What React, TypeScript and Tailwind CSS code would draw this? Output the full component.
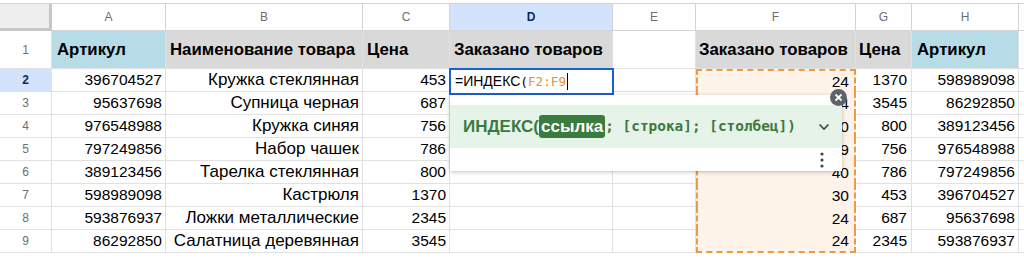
import React from 'react';

const cols = ['A', 'B', 'C', 'D', 'E', 'F', 'G', 'H'];

const rows = [
  { n: 2, a: '396704527', b: 'Кружка стеклянная', c: '453', f: '24', g: '1370', h: '598989098' },
  { n: 3, a: '95637698', b: 'Супница черная', c: '687', f: '34', g: '3545', h: '86292850' },
  { n: 4, a: '976548988', b: 'Кружка синяя', c: '756', f: '20', g: '800', h: '389123456' },
  { n: 5, a: '797249856', b: 'Набор чашек', c: '786', f: '19', g: '756', h: '976548988' },
  { n: 6, a: '389123456', b: 'Тарелка стеклянная', c: '800', f: '40', g: '786', h: '797249856' },
  { n: 7, a: '598989098', b: 'Кастрюля', c: '1370', f: '30', g: '453', h: '396704527' },
  { n: 8, a: '593876937', b: 'Ложки металлические', c: '2345', f: '24', g: '687', h: '95637698' },
  { n: 9, a: '86292850', b: 'Салатница деревянная', c: '3545', f: '24', g: '2345', h: '593876937' },
];

const line = 'border-r border-b border-[#e1e1e1]';
const head = `${line} font-bold text-[16.8px] flex items-center whitespace-nowrap overflow-hidden`;
const mono = { fontFamily: '"DejaVu Sans Mono", monospace' };

const Num: React.FC<{ children?: React.ReactNode; className?: string }> = ({ children, className = '' }) => (
  <div className={`${line} flex items-center justify-end pr-[3px] whitespace-nowrap overflow-hidden ${className}`}>
    {children}
  </div>
);

const App: React.FC = () => {
  return (
    <div
      className="relative w-[1024px] h-[258px] overflow-hidden bg-white pt-[3px] text-[15.5px] text-black"
      style={{ fontFamily: '"Liberation Sans", Arial, sans-serif' }}
    >
      <div className="grid grid-cols-[52px_114px_197px_87px_163px_83px_160px_56px_107px_5px] grid-rows-[27px_38px_repeat(9,23px)] border-t border-[#d4d4d4]">
        {/* column headers */}
        <div className="bg-[#eeeeee] border-r-[3px] border-b-[3px] border-[#c7c7c7]" />
        {cols.map((c) => (
          <div
            key={c}
            className={`flex items-center justify-center text-[12px] border-r border-b border-[#d4d4d4] ${
              c === 'D' ? 'bg-[#d3e3fd] text-[#0b2a5c] font-bold' : 'bg-white text-[#6b6f73]'
            }`}
          >
            {c}
          </div>
        ))}
        <div className="border-b border-[#d4d4d4]" />

        {/* row 1 */}
        <div className={`${line} flex items-center justify-center text-[12px] text-[#6b6f73]`}>1</div>
        <div className={`${head} bg-[#b5dce7] pl-[5px]`}>Артикул</div>
        <div className={`${head} bg-[#d9d9d9] pl-[4px]`}>Наименование товара</div>
        <div className={`${head} bg-[#d9d9d9] pl-[4px]`}>Цена</div>
        <div className={`${head} bg-[#d9d9d9] pl-[4px]`}>Заказано товаров</div>
        <div className={line} />
        <div className={`${head} bg-[#d9d9d9] pl-[3px]`}>Заказано товаров</div>
        <div className={`${head} bg-[#d9d9d9] pl-[3px]`}>Цена</div>
        <div className={`${head} bg-[#b5dce7] pl-[5px]`}>Артикул</div>
        <div className="border-b border-[#e1e1e1]" />

        {/* data rows */}
        {rows.map((r, i) => (
          <React.Fragment key={r.n}>
            <div
              className={`${line} flex items-center justify-center text-[12px] ${
                r.n === 2 ? 'bg-[#d3e3fd] text-[#0b2a5c] font-bold' : 'text-[#6b6f73]'
              }`}
            >
              {r.n}
            </div>
            <Num>{r.a}</Num>
            <Num className="text-[17px]">{r.b}</Num>
            <Num>{r.c}</Num>
            {r.n === 2 ? (
              <div className={`${line} relative`}>
                <div className="absolute -left-px -top-px w-[165px] h-[27px] border-2 border-[#1a5fd6] bg-white flex items-center pl-[4px] whitespace-nowrap">
                  <span className="text-[14px]">=ИНДЕКС</span>
                  <span className="text-[12.7px]" style={mono}>(</span>
                  <span className="text-[#e8912d] text-[12.7px]" style={mono}>
                    F2:F9
                  </span>
                  <span className="w-px h-[17px] bg-black ml-px" />
                </div>
              </div>
            ) : (
              <div className={line} />
            )}
            <div className={line} />
            <div
              className={`flex items-center justify-end pr-[5px] bg-[#fdf3e8] border-x-2 border-dashed border-[#eb9b45] ${
                i === 0 ? 'border-t-2' : ''
              } ${i === rows.length - 1 ? 'border-b-2' : ''}`}
            >
              {r.f}
            </div>
            <Num className="pr-[4px]">{r.g}</Num>
            <Num className="pr-0">{r.h}</Num>
            <div className="border-b border-[#e1e1e1]" />
          </React.Fragment>
        ))}
      </div>

      {/* formula hint popup */}
      <div className="absolute left-[450px] top-[95px] w-[392px] h-[76px] bg-white shadow-[0_1px_4px_rgba(0,0,0,0.25)] flex flex-col">
        <div className="mt-[10px] h-[43px] bg-[#e6f3e8] flex items-center pl-[13px] pr-[12px] text-[#3b7a3f] font-bold whitespace-nowrap">
          <span className="text-[17px]">ИНДЕКС(</span>
          <span className="text-[17px] bg-[#3a7c3d] text-white rounded-[3px] px-[2px] leading-[23px]">ссылка</span>
          <span className="text-[14.4px]" style={mono}>
            ; [строка]; [столбец])
          </span>
          <svg className="ml-auto" width="12" height="8" viewBox="0 0 12 8">
            <path d="M1.5 1.5 L6 6 L10.5 1.5" fill="none" stroke="#444" strokeWidth="1.6" />
          </svg>
        </div>
        <div className="flex-1 flex items-center justify-end pr-[18px]">
          <svg width="4" height="16" viewBox="0 0 4 16">
            <circle cx="2" cy="2" r="1.6" fill="#444" />
            <circle cx="2" cy="8" r="1.6" fill="#444" />
            <circle cx="2" cy="14" r="1.6" fill="#444" />
          </svg>
        </div>
      </div>
      <div className="absolute left-[830px] top-[89px] w-[17px] h-[17px] rounded-full bg-[#5f6368] flex items-center justify-center">
        <svg width="9" height="9" viewBox="0 0 9 9">
          <path d="M1.5 1.5 L7.5 7.5 M7.5 1.5 L1.5 7.5" stroke="#fff" strokeWidth="1.8" />
        </svg>
      </div>
    </div>
  );
};

export default App;
